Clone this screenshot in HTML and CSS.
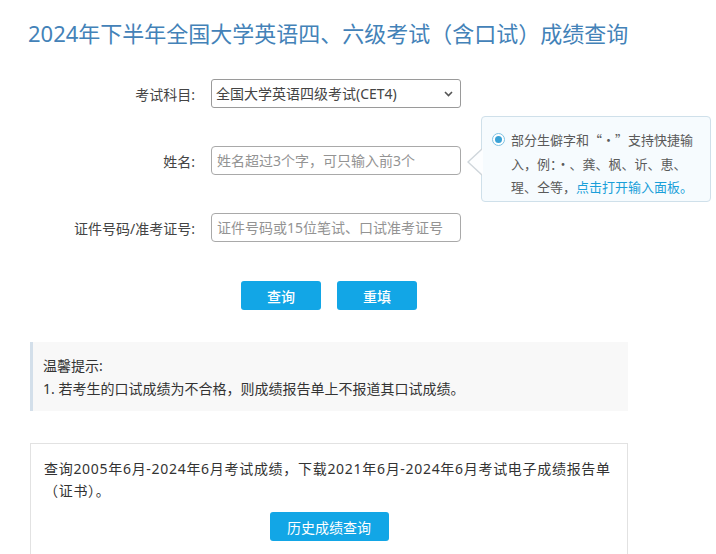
FILE: index.html
```html
<!DOCTYPE html>
<html lang="zh-CN">
<head>
<meta charset="utf-8">
<title>成绩查询</title>
<link rel="stylesheet" href="styles.css">
</head>
<body>
<div class="page">
  <h1 class="title">2024年下半年全国大学英语四、六级考试（含口试）成绩查询</h1>

  <form class="query">
    <div class="row">
      <label class="label">考试科目:</label>
      <div class="select-wrap">
        <select class="field select">
          <option>全国大学英语四级考试(CET4)</option>
        </select>
        <svg class="chevron" width="9" height="6" viewBox="0 0 9 6"><path d="M1 1 L4.5 4.5 L8 1" stroke="#555" stroke-width="1.6" fill="none"/></svg>
      </div>
    </div>

    <div class="row">
      <label class="label">姓名:</label>
      <input class="field" type="text" placeholder="姓名超过3个字，可只输入前3个">
      <div class="tooltip">
        <span class="radio"><span class="radio-dot"></span></span>
        <p class="tooltip-text">部分生僻字和“·”支持快捷输<br>入，例：·、龚、枫、䜣、恵、<br>瑆、仝等，<a class="link" href="#">点击打开输入面板。</a></p>
      </div>
    </div>

    <div class="row">
      <label class="label">证件号码/准考证号:</label>
      <input class="field" type="text" placeholder="证件号码或15位笔试、口试准考证号">
    </div>

    <div class="actions">
      <button type="button" class="btn">查询</button>
      <button type="button" class="btn">重填</button>
    </div>
  </form>

  <div class="notice">
    <p class="notice-line">温馨提示:</p>
    <p class="notice-line">1. 若考生的口试成绩为不合格，则成绩报告单上不报道其口试成绩。</p>
  </div>

  <div class="history">
    <p class="history-text">查询2005年6月-2024年6月考试成绩，下载2021年6月-2024年6月考试电子成绩报告单（证书）。</p>
    <div class="history-actions">
      <button type="button" class="btn btn-wide">历史成绩查询</button>
    </div>
  </div>
</div>
</body>
</html>
```

FILE: styles.css
```css
* { box-sizing: border-box; }

html, body {
  margin: 0;
  padding: 0;
  background: #fff;
}

body {
  font-family: "Noto Sans", "Noto Sans CJK SC", sans-serif;
  color: #333;
  font-size: 14px;
}

.page {
  margin-left: 29px;
  width: 599px;
}

.title {
  margin: 18px 0 0 -1px;
  font-size: 22px;
  line-height: 30px;
  font-weight: normal;
  color: #4382b8;
  white-space: nowrap;
}

.query {
  margin-top: 31px;
}

.row {
  position: relative;
  display: flex;
  align-items: center;
  height: 29px;
  margin-bottom: 38px;
}

.label {
  width: 166px;
  text-align: right;
  font-size: 14px;
  color: #444;
  margin-right: 16px;
}

.field {
  width: 250px;
  height: 29px;
  border: 1px solid #a9a9a9;
  border-radius: 4px;
  padding: 0 5px;
  font-family: "Noto Sans", "Noto Sans CJK SC", sans-serif;
  font-size: 14px;
  color: #333;
  background: #fff;
  outline: none;
}

.field::placeholder {
  color: #939393;
}

.select-wrap {
  position: relative;
  width: 250px;
  height: 29px;
}

.select {
  appearance: none;
  -webkit-appearance: none;
  border-color: #9a9a9a;
  border-radius: 3px;
  padding-left: 4px;
  color: #444;
}

.chevron {
  position: absolute;
  right: 8px;
  top: 12px;
  pointer-events: none;
}

.tooltip {
  position: absolute;
  left: 452px;
  top: -30px;
  width: 230px;
  height: 86px;
  display: flex;
  align-items: flex-start;
  gap: 6px;
  padding: 11px 10px 0 10px;
  border: 1px solid #cfe0ea;
  border-radius: 4px;
  background: #f6fbfe;
}

.tooltip::before,
.tooltip::after {
  content: "";
  position: absolute;
  top: 31px;
  width: 0;
  height: 0;
  border-style: solid;
}

.tooltip::before {
  left: -15px;
  border-width: 14px 15px 14px 0;
  border-color: transparent #cfd6db transparent transparent;
}

.tooltip::after {
  left: -13px;
  top: 32px;
  border-width: 13px 14px 13px 0;
  border-color: transparent #fdfeff transparent transparent;
}

.radio {
  flex: none;
  width: 13px;
  height: 13px;
  margin-top: 5px;
  border-radius: 50%;
  border: 1px solid #7fc2e2;
  background: #fff;
  display: flex;
  align-items: center;
  justify-content: center;
}

.radio-dot {
  width: 7px;
  height: 7px;
  border-radius: 50%;
  background: #3aa2d6;
}

.tooltip-text {
  margin: 0;
  font-family: "Noto Sans CJK SC", sans-serif;
  font-size: 13px;
  line-height: 23.5px;
  color: #5a5a5a;
  white-space: nowrap;
}

.link {
  color: #1a9fd9;
  text-decoration: none;
}

.actions {
  display: flex;
  justify-content: center;
  gap: 16px;
  padding-left: 1px;
  padding-top: 1px;
}

.btn {
  width: 80px;
  height: 29px;
  border: none;
  border-radius: 3px;
  background: #12a6e6;
  color: #fff;
  font-family: "Noto Sans CJK SC", sans-serif;
  font-size: 14px;
  font-weight: 500;
  cursor: pointer;
  padding: 0;
}

.btn-wide {
  width: 119px;
  font-weight: normal;
}

.notice {
  margin-top: 32px;
  margin-left: 1px;
  border-left: 3px solid #d3dfea;
  background: #f8f8f8;
  padding: 12px 12px 11px 10px;
}

.notice-line {
  margin: 0;
  font-size: 14px;
  line-height: 23px;
  color: #333;
}

.history {
  margin-top: 32px;
  margin-left: 1px;
  border: 1px solid #e2e2e2;
  border-bottom: none;
  padding: 14px 13px 16px 13px;
  height: 130px;
}

.history-text {
  margin: 0;
  font-size: 14px;
  line-height: 22px;
  color: #333;
  letter-spacing: 0.7px;
}

.history-actions {
  display: flex;
  justify-content: center;
  margin-top: 10px;
}
```
